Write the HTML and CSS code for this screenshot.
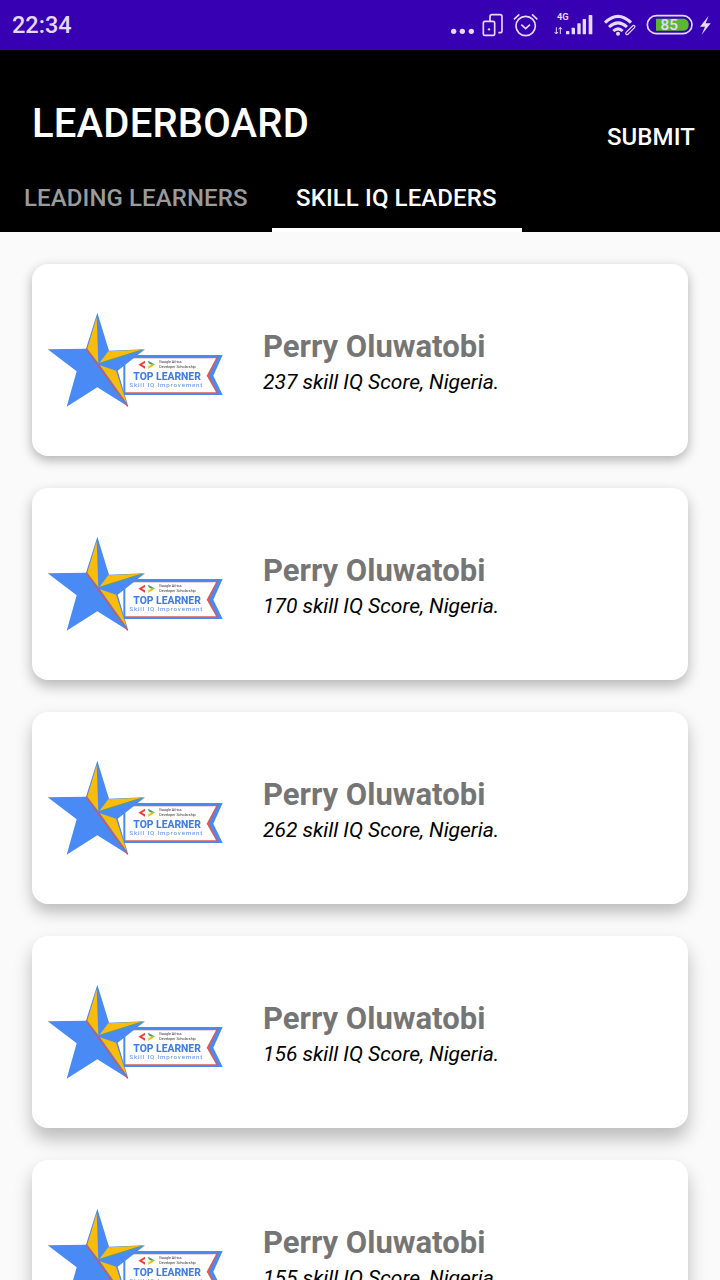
FILE: index.html
```html
<!DOCTYPE html>
<html lang="en">
<head>
<meta charset="utf-8">
<title>Leaderboard</title>
<link rel="stylesheet" href="styles.css">
</head>
<body>
<div class="status">
  <span class="time">22:34</span>
  <svg class="status-icons" viewBox="0 0 840 150" fill="none" stroke="#e6d9ff">
    <g fill="#e6d9ff" stroke="none"><circle cx="41" cy="94" r="8"/><circle cx="67" cy="94" r="8"/><circle cx="94" cy="94" r="8"/></g>
    <path d="M150 64V50a6 6 0 0 1 6-6h24a6 6 0 0 1 6 6v42a6 6 0 0 1-6 6h-5" stroke-width="5"/>
    <rect x="130" y="64" width="34" height="42" rx="5" stroke-width="5"/>
    <circle cx="147" cy="88" r="3.5" fill="#e6d9ff" stroke="none"/>
    <circle cx="257" cy="78" r="29" stroke-width="5"/>
    <path d="M244 74l13 12 13-12" stroke-width="5"/>
    <path d="M222 58l16-15M292 58l-16-15" stroke-width="5"/>
    <text x="351" y="59" class="tiny">4G</text>
    <path d="M349 82v20M344 96l5 6 5-6M361 102V82M356 88l5-6 5 6" stroke-width="3"/>
    <g fill="#e6d9ff" stroke="none">
      <rect x="378" y="93" width="10" height="10" rx="2"/><rect x="395" y="83" width="10" height="20" rx="2"/><rect x="412" y="70" width="10" height="33" rx="2"/><rect x="428" y="57" width="10" height="46" rx="2"/><rect x="446" y="45" width="11" height="58" rx="2"/>
    </g>
    <path d="M495 68Q534 30 573 68M507 81Q534 56 561 81M520 93Q534 80 548 93" stroke-width="9"/>
    <circle cx="534" cy="101" r="6" fill="#e6d9ff" stroke="none"/>
    <path d="M560 101l22-22" stroke="#3700b3" stroke-width="16"/>
    <path d="M561 100l20-20" stroke-width="11" stroke-linecap="round"/><path d="M561 100l20-20" stroke="#3700b3" stroke-width="4" stroke-linecap="round"/>
    <rect x="622" y="47" width="134" height="54" rx="27" stroke-width="5"/>
    <path d="M648 56h84a18 18 0 0 1 14 18 18 18 0 0 1-14 18h-84z" fill="#5cb82e" stroke="none"/>
    <text x="688" y="91" class="pct">85</text>
    <path d="M806 47l-26 33h15l-10 24 27-34h-15z" fill="#e6d9ff" stroke="none"/>
  </svg>
</div>
<header class="appbar">
  <div class="appbar-top">
    <h1 class="title">LEADERBOARD</h1>
    <span class="submit">SUBMIT</span>
  </div>
  <nav class="tabs">
    <span class="tab tab-first">LEADING LEARNERS</span>
    <span class="tab tab-active">SKILL IQ LEADERS</span>
  </nav>
</header>
<main class="list">
  <article class="card card-1">
    <svg class="badge" viewBox="0 0 600 360">
      <path class="rb" d="M250 165H548L520 227 548 285H250z"/><path class="rr" d="M256 171H535L507 227 535 281H256z"/><path class="rw" d="M256 175H528L500 227 528 277H256z"/>
      <path class="st" d="M172 38L207 152 315 148 233 212 265 320 172 262 80 320 110 214 23 148 138 146z"/>
      <path class="yl" d="M170 52L142 146 175 189zM178 189L205 154 305 149zM180 196L260 309 228 212z"/>
      <path d="M138 146L263 319" class="rl"/><path d="M176 191L305 150" class="gl"/>
      <path class="chr" d="M306 194L295 194 315 182V189zM295 194H306L315 199V206z"/><path class="chb" d="M325 182L345 194H334L325 189z"/><path class="chy" d="M345 194H334L325 199V206z"/>
      <text x="358" y="189" class="b1">Google Africa</text><text x="358" y="203" class="b1">Developer Scholarship</text>
      <text x="280" y="241" class="b2">TOP LEARNER</text><text x="268" y="262" class="b3">Skill IQ Improvement</text>
    </svg>
    <div class="info"><h2 class="name">Perry Oluwatobi</h2><p class="score">237 skill IQ Score, Nigeria.</p></div>
  </article>
  <article class="card card-2">
    <svg class="badge" viewBox="0 0 600 360">
      <path class="rb" d="M250 165H548L520 227 548 285H250z"/><path class="rr" d="M256 171H535L507 227 535 281H256z"/><path class="rw" d="M256 175H528L500 227 528 277H256z"/>
      <path class="st" d="M172 38L207 152 315 148 233 212 265 320 172 262 80 320 110 214 23 148 138 146z"/>
      <path class="yl" d="M170 52L142 146 175 189zM178 189L205 154 305 149zM180 196L260 309 228 212z"/>
      <path d="M138 146L263 319" class="rl"/><path d="M176 191L305 150" class="gl"/>
      <path class="chr" d="M306 194L295 194 315 182V189zM295 194H306L315 199V206z"/><path class="chb" d="M325 182L345 194H334L325 189z"/><path class="chy" d="M345 194H334L325 199V206z"/>
      <text x="358" y="189" class="b1">Google Africa</text><text x="358" y="203" class="b1">Developer Scholarship</text>
      <text x="280" y="241" class="b2">TOP LEARNER</text><text x="268" y="262" class="b3">Skill IQ Improvement</text>
    </svg>
    <div class="info"><h2 class="name">Perry Oluwatobi</h2><p class="score">170 skill IQ Score, Nigeria.</p></div>
  </article>
  <article class="card card-3">
    <svg class="badge" viewBox="0 0 600 360">
      <path class="rb" d="M250 165H548L520 227 548 285H250z"/><path class="rr" d="M256 171H535L507 227 535 281H256z"/><path class="rw" d="M256 175H528L500 227 528 277H256z"/>
      <path class="st" d="M172 38L207 152 315 148 233 212 265 320 172 262 80 320 110 214 23 148 138 146z"/>
      <path class="yl" d="M170 52L142 146 175 189zM178 189L205 154 305 149zM180 196L260 309 228 212z"/>
      <path d="M138 146L263 319" class="rl"/><path d="M176 191L305 150" class="gl"/>
      <path class="chr" d="M306 194L295 194 315 182V189zM295 194H306L315 199V206z"/><path class="chb" d="M325 182L345 194H334L325 189z"/><path class="chy" d="M345 194H334L325 199V206z"/>
      <text x="358" y="189" class="b1">Google Africa</text><text x="358" y="203" class="b1">Developer Scholarship</text>
      <text x="280" y="241" class="b2">TOP LEARNER</text><text x="268" y="262" class="b3">Skill IQ Improvement</text>
    </svg>
    <div class="info"><h2 class="name">Perry Oluwatobi</h2><p class="score">262 skill IQ Score, Nigeria.</p></div>
  </article>
  <article class="card card-4">
    <svg class="badge" viewBox="0 0 600 360">
      <path class="rb" d="M250 165H548L520 227 548 285H250z"/><path class="rr" d="M256 171H535L507 227 535 281H256z"/><path class="rw" d="M256 175H528L500 227 528 277H256z"/>
      <path class="st" d="M172 38L207 152 315 148 233 212 265 320 172 262 80 320 110 214 23 148 138 146z"/>
      <path class="yl" d="M170 52L142 146 175 189zM178 189L205 154 305 149zM180 196L260 309 228 212z"/>
      <path d="M138 146L263 319" class="rl"/><path d="M176 191L305 150" class="gl"/>
      <path class="chr" d="M306 194L295 194 315 182V189zM295 194H306L315 199V206z"/><path class="chb" d="M325 182L345 194H334L325 189z"/><path class="chy" d="M345 194H334L325 199V206z"/>
      <text x="358" y="189" class="b1">Google Africa</text><text x="358" y="203" class="b1">Developer Scholarship</text>
      <text x="280" y="241" class="b2">TOP LEARNER</text><text x="268" y="262" class="b3">Skill IQ Improvement</text>
    </svg>
    <div class="info"><h2 class="name">Perry Oluwatobi</h2><p class="score">156 skill IQ Score, Nigeria.</p></div>
  </article>
  <article class="card card-4">
    <svg class="badge" viewBox="0 0 600 360">
      <path class="rb" d="M250 165H548L520 227 548 285H250z"/><path class="rr" d="M256 171H535L507 227 535 281H256z"/><path class="rw" d="M256 175H528L500 227 528 277H256z"/>
      <path class="st" d="M172 38L207 152 315 148 233 212 265 320 172 262 80 320 110 214 23 148 138 146z"/>
      <path class="yl" d="M170 52L142 146 175 189zM178 189L205 154 305 149zM180 196L260 309 228 212z"/>
      <path d="M138 146L263 319" class="rl"/><path d="M176 191L305 150" class="gl"/>
      <path class="chr" d="M306 194L295 194 315 182V189zM295 194H306L315 199V206z"/><path class="chb" d="M325 182L345 194H334L325 189z"/><path class="chy" d="M345 194H334L325 199V206z"/>
      <text x="358" y="189" class="b1">Google Africa</text><text x="358" y="203" class="b1">Developer Scholarship</text>
      <text x="280" y="241" class="b2">TOP LEARNER</text><text x="268" y="262" class="b3">Skill IQ Improvement</text>
    </svg>
    <div class="info"><h2 class="name">Perry Oluwatobi</h2><p class="score">155 skill IQ Score, Nigeria.</p></div>
  </article>
</main>
</body>
</html>
```

FILE: styles.css
```css
* { box-sizing: border-box; }
html, body { margin: 0; height: 1280px; overflow: hidden; }
body { background: #fafafa; font-family: Roboto, "Liberation Sans", sans-serif; }

.status { height: 50px; background: #3700b3; display: flex; align-items: center; justify-content: space-between; padding-left: 12px; }
.time { color: #e6d9ff; font-size: 23.5px; font-weight: 500; line-height: 50px; }
.status-icons { width: 280px; height: 50px; display: block; }
.tiny { font: 700 28px Roboto, sans-serif; fill: #e6d9ff; stroke: none; }
.pct { font: 500 46px Roboto, sans-serif; fill: #e6d9ff; stroke: none; text-anchor: middle; }

.appbar { background: #000; height: 182px; display: flex; flex-direction: column; }
.appbar-top { height: 118px; display: flex; justify-content: space-between; align-items: flex-start; padding: 51px 25px 0 32px; }
.title { margin: 0; color: #fff; font-size: 40px; font-weight: 500; line-height: 46px; letter-spacing: .2px; }
.submit { color: #fff; font-size: 24px; font-weight: 500; line-height: 28px; margin-top: 22px; letter-spacing: .1px; }
.tabs { display: flex; height: 64px; }
.tab { padding: 0 24px; color: #9b9b9b; font-size: 24px; font-weight: 500; line-height: 60px; height: 64px; letter-spacing: .1px; }
.tab-first { width: 272px; }
.tab-active { color: #fff; border-bottom: 4px solid #fff; width: 250px; }

.list { padding: 32px 32px 0; display: flex; flex-direction: column; gap: 32px; }
.card { flex: none; height: 192px; background: #fff; border-radius: 16px; display: flex; align-items: center; padding-left: 8px; }
.card-1 { box-shadow: 0 4px 12px rgba(0, 0, 0, .3); }
.card-2 { box-shadow: 0 6px 14px rgba(0, 0, 0, .28); }
.card-3 { box-shadow: 0 8px 16px rgba(0, 0, 0, .26); }
.card-4 { box-shadow: 0 11px 18px rgba(0, 0, 0, .25); }
.badge { width: 200px; height: 120px; flex: none; filter: blur(.4px); }
.info { margin-left: 23px; margin-top: 5px; }
.name { margin: 0; color: #757575; font-size: 31px; font-weight: 700; line-height: 38px; }
.score { margin: 0; color: #000; font-size: 21px; font-style: italic; line-height: 32px; }

.rb, .st { fill: #4a8af4; }
.rr { fill: #d0605e; }
.rw { fill: #fff; }
.yl { fill: #fbbc05; }
.rl { stroke: #d9534f; stroke-width: 3.5; fill: none; }
.gl { stroke: #5aa469; stroke-width: 3; fill: none; }
.chr { fill: #ea4335; }
.chb { fill: #34a853; }
.chy { fill: #fbbc05; }
.b1 { font: 400 11px Roboto, sans-serif; fill: #333; }
.b2 { font: 800 31px Roboto, sans-serif; fill: #3f7fe0; }
.b3 { font: 500 18.5px Roboto, sans-serif; fill: #6f9fe8; letter-spacing: 2.5px; }
```
